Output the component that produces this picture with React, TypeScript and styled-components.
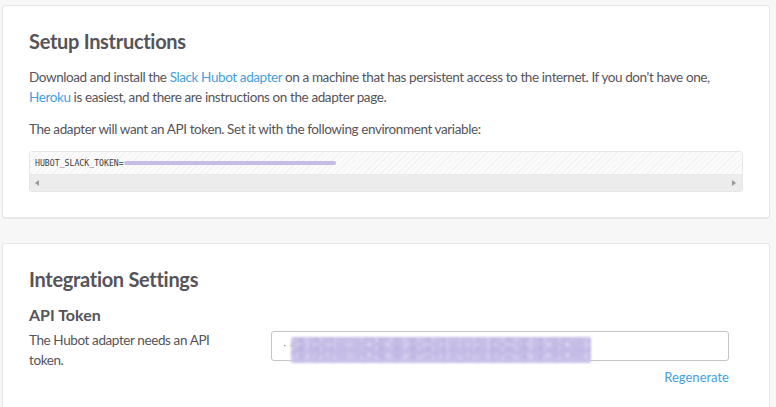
import React from "react";
import styled, { createGlobalStyle } from "styled-components";

const GlobalStyle = createGlobalStyle`
  html, body {
    margin: 0;
    padding: 0;
    background: #f7f7f7;
  }
  body {
    font-family: Lato, "Open Sans", "Liberation Sans", sans-serif;
    color: #555459;
    -webkit-font-smoothing: antialiased;
  }
`;

const Page = styled.div`
  display: flex;
  flex-direction: column;
  gap: 25px;
  padding: 5px 6px 0 2px;
  height: 407px;
  overflow: hidden;
  box-sizing: border-box;
`;

const Card = styled.section`
  background: #fff;
  border: 1px solid #e6e6e6;
  border-radius: 3px;
  box-shadow: 0 1px 1px rgba(0, 0, 0, 0.06);
  padding: 23px 26px 25px 26px;
  flex-shrink: 0;
`;

const Title = styled.h2`
  margin: 0 0 14px;
  font-size: 20px;
  line-height: 24px;
  font-weight: 700;
  letter-spacing: -0.3px;
  color: #555459;
`;

const SubTitle = styled.h3`
  margin: 7px 0 5px;
  font-size: 16px;
  line-height: 20px;
  font-weight: 700;
  color: #555459;
`;

const Para = styled.p`
  margin: 0 0 12px;
  font-size: 13.5px;
  line-height: 20px;
  letter-spacing: -0.4px;
  color: #555459;
`;

const Link = styled.a`
  color: #439fe0;
  text-decoration: none;
`;

const CodeBox = styled.div`
  border: 1px solid #e6e6e6;
  border-radius: 3px;
  overflow: hidden;
  display: flex;
  flex-direction: column;
`;

const CodeLine = styled.div`
  height: 22px;
  display: flex;
  align-items: center;
  padding-left: 5px;
  background: repeating-linear-gradient(
    -45deg,
    #fbfbfb 0px,
    #fbfbfb 3px,
    #f2f2f2 3px,
    #f2f2f2 4px
  );
  border-bottom: 1px solid #e9e9e9;
  font-family: "DejaVu Sans Mono", "Liberation Mono", monospace;
  font-size: 8.2px;
  color: #3d3c40;
  white-space: nowrap;
`;

const Smudge = styled.span<{ $w: number; $h: number }>`
  display: inline-block;
  width: ${(p) => p.$w}px;
  height: ${(p) => p.$h}px;
  background: #c6bde6;
  border-radius: 3px;
  filter: blur(0.6px);
`;

const ScrollTrack = styled.div`
  height: 16px;
  background: #ececec;
  display: flex;
  align-items: center;
  justify-content: space-between;
  padding: 0 6px 0 5px;
`;

const Arrow = styled.span<{ $dir: "left" | "right" }>`
  width: 0;
  height: 0;
  border-top: 3.5px solid transparent;
  border-bottom: 3.5px solid transparent;
  ${(p) =>
    p.$dir === "left"
      ? "border-right: 4px solid #9a9a9a;"
      : "border-left: 4px solid #9a9a9a;"}
`;

const FieldRow = styled.div`
  display: grid;
  grid-template-columns: 230px 458px;
  column-gap: 12px;
  align-items: start;
`;

const FieldHelp = styled.p`
  margin: 0;
  max-width: 200px;
  font-size: 13.5px;
  line-height: 20px;
  letter-spacing: -0.4px;
  color: #555459;
`;

const FieldControl = styled.div`
  display: flex;
  flex-direction: column;
  align-items: flex-end;
  padding-top: 1px;
`;

const TokenInput = styled.div`
  width: 100%;
  height: 30px;
  box-sizing: border-box;
  border: 1px solid #c5c5c5;
  border-radius: 3px;
  background: #fff;
  display: flex;
  align-items: center;
  padding-left: 10px;
`;

const TokenDots = styled.span`
  font-family: "Liberation Mono", monospace;
  font-size: 9px;
  color: #777;
  letter-spacing: 1px;
  margin-right: -4px;
`;

/* redacted token value: a mottled lavender patch hanging slightly below the field */
const TokenSmudge = styled.span`
  display: inline-block;
  width: 300px;
  height: 26px;
  margin-top: 8px;
  border-radius: 2px;
  background:
    radial-gradient(circle at 10% 30%, rgba(255, 255, 255, 0.16) 0 2px, transparent 3px),
    radial-gradient(circle at 35% 70%, rgba(255, 255, 255, 0.14) 0 2px, transparent 3px),
    radial-gradient(circle at 62% 40%, rgba(140, 130, 180, 0.12) 0 2px, transparent 3px),
    radial-gradient(circle at 85% 75%, rgba(255, 255, 255, 0.16) 0 2px, transparent 3px),
    linear-gradient(180deg, #c9c0e8 0%, #c3bae6 55%, #cbc3ea 100%);
  background-size: 14px 9px, 18px 11px, 16px 8px, 20px 10px, 100% 100%;
  filter: blur(1px);
`;

const Regenerate = styled.a`
  margin-top: 8px;
  font-size: 13px;
  line-height: 16px;
  color: #439fe0;
  text-decoration: none;
`;

export default function App() {
  return (
    <>
      <GlobalStyle />
      <Page>
        <Card>
          <Title>Setup Instructions</Title>
          <Para>
            Download and install the <Link href="#">Slack Hubot adapter</Link> on a machine that
            has persistent access to the internet. If you don't have one,{" "}
            <Link href="#">Heroku</Link> is easiest, and there are instructions on the adapter page.
          </Para>
          <Para>The adapter will want an API token. Set it with the following environment variable:</Para>
          <CodeBox>
            <CodeLine>
              HUBOT_SLACK_TOKEN=
              <Smudge $w={212} $h={4} />
            </CodeLine>
            <ScrollTrack>
              <Arrow $dir="left" />
              <Arrow $dir="right" />
            </ScrollTrack>
          </CodeBox>
        </Card>
        <Card>
          <Title>Integration Settings</Title>
          <SubTitle>API Token</SubTitle>
          <FieldRow>
            <FieldHelp>The Hubot adapter needs an API token.</FieldHelp>
            <FieldControl>
              <TokenInput>
                <TokenDots>··</TokenDots>
                <TokenSmudge />
              </TokenInput>
              <Regenerate href="#">Regenerate</Regenerate>
            </FieldControl>
          </FieldRow>
        </Card>
      </Page>
    </>
  );
}
